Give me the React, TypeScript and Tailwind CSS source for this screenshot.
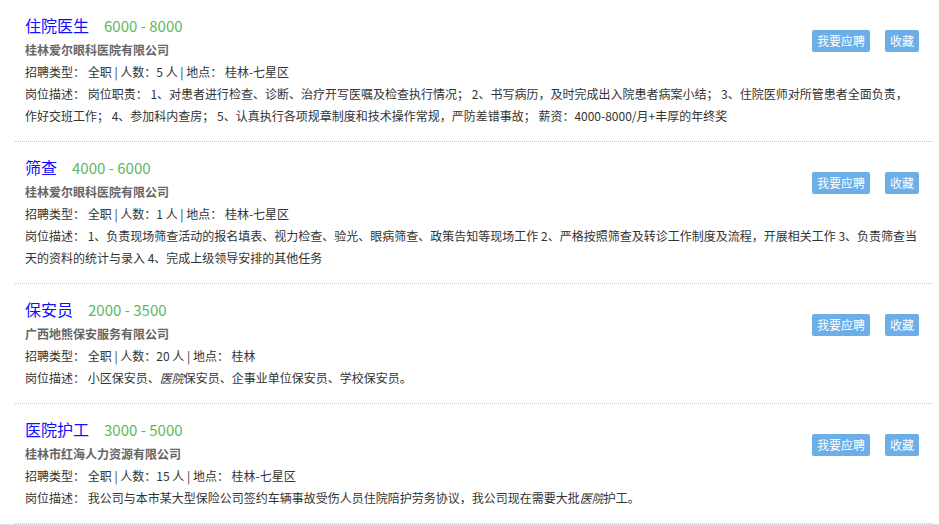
import React from "react";

type Job = {
  title: string;
  salary: string;
  company: string;
  meta: string;
  desc: React.ReactNode;
};

const jobs: Job[] = [
  {
    title: "住院医生",
    salary: "6000 - 8000",
    company: "桂林爱尔眼科医院有限公司",
    meta: "招聘类型： 全职 | 人数：5 人 | 地点： 桂林-七星区",
    desc: (
      <>
        岗位描述： 岗位职责： 1、对患者进行检查、诊断、治疗开写医嘱及检查执行情况； 2、书写病历，及时完成出入院患者病案小结； 3、住院医师对所管患者全面负责，
        <br />
        作好交班工作； 4、参加科内查房； 5、认真执行各项规章制度和技术操作常规，严防差错事故； 薪资：4000-8000/月+丰厚的年终奖
      </>
    ),
  },
  {
    title: "筛查",
    salary: "4000 - 6000",
    company: "桂林爱尔眼科医院有限公司",
    meta: "招聘类型： 全职 | 人数：1 人 | 地点： 桂林-七星区",
    desc: "岗位描述： 1、负责现场筛查活动的报名填表、视力检查、验光、眼病筛查、政策告知等现场工作 2、严格按照筛查及转诊工作制度及流程，开展相关工作 3、负责筛查当天的资料的统计与录入 4、完成上级领导安排的其他任务",
  },
  {
    title: "保安员",
    salary: "2000 - 3500",
    company: "广西地熊保安服务有限公司",
    meta: "招聘类型： 全职 | 人数：20 人 | 地点： 桂林",
    desc: (
      <>
        岗位描述： 小区保安员、<i>医院</i>保安员、企事业单位保安员、学校保安员。
      </>
    ),
  },
  {
    title: "医院护工",
    salary: "3000 - 5000",
    company: "桂林市红海人力资源有限公司",
    meta: "招聘类型： 全职 | 人数：15 人 | 地点： 桂林-七星区",
    desc: (
      <>
        岗位描述： 我公司与本市某大型保险公司签约车辆事故受伤人员住院陪护劳务协议，我公司现在需要大批<i>医院</i>护工。
      </>
    ),
  },
];

export default function App() {
  return (
    <div
      className="w-[939px] h-[525px] overflow-hidden bg-white"
      style={{ fontFamily: '"Noto Sans CJK SC", "Noto Sans", sans-serif' }}
    >
      <div className="mx-[15px] w-[918px]">
        {jobs.map((j, i) => (
          <div
            key={i}
            className="relative border-b border-dotted border-[#c8c8c8] pl-[10px] pr-[10px] pt-[12px] pb-[14px]"
          >
            <div className="flex items-baseline h-[27px] leading-[27px]">
              <span className="text-[16px] text-[#1010ff]">{j.title}</span>
              <span className="ml-[15px] text-[15px] text-[#5cb85c]">{j.salary}</span>
            </div>
            <div className="text-[12px] leading-[22px] font-bold text-[#666]">{j.company}</div>
            <div className="text-[12px] leading-[22px] text-[#333]">{j.meta}</div>
            <div className="text-[12px] leading-[22px] text-[#333]">{j.desc}</div>
            <div className="absolute top-[30px] right-[14px] flex gap-[15px]">
              <button className="h-[22px] px-[5px] rounded-[2px] bg-[#6caee8] text-white text-[12px] leading-[22px]">
                我要应聘
              </button>
              <button className="h-[22px] px-[5px] rounded-[2px] bg-[#6caee8] text-white text-[12px] leading-[22px]">
                收藏
              </button>
            </div>
          </div>
        ))}
      </div>
      <div className="h-px bg-[#e2e2e2]" />
    </div>
  );
}
